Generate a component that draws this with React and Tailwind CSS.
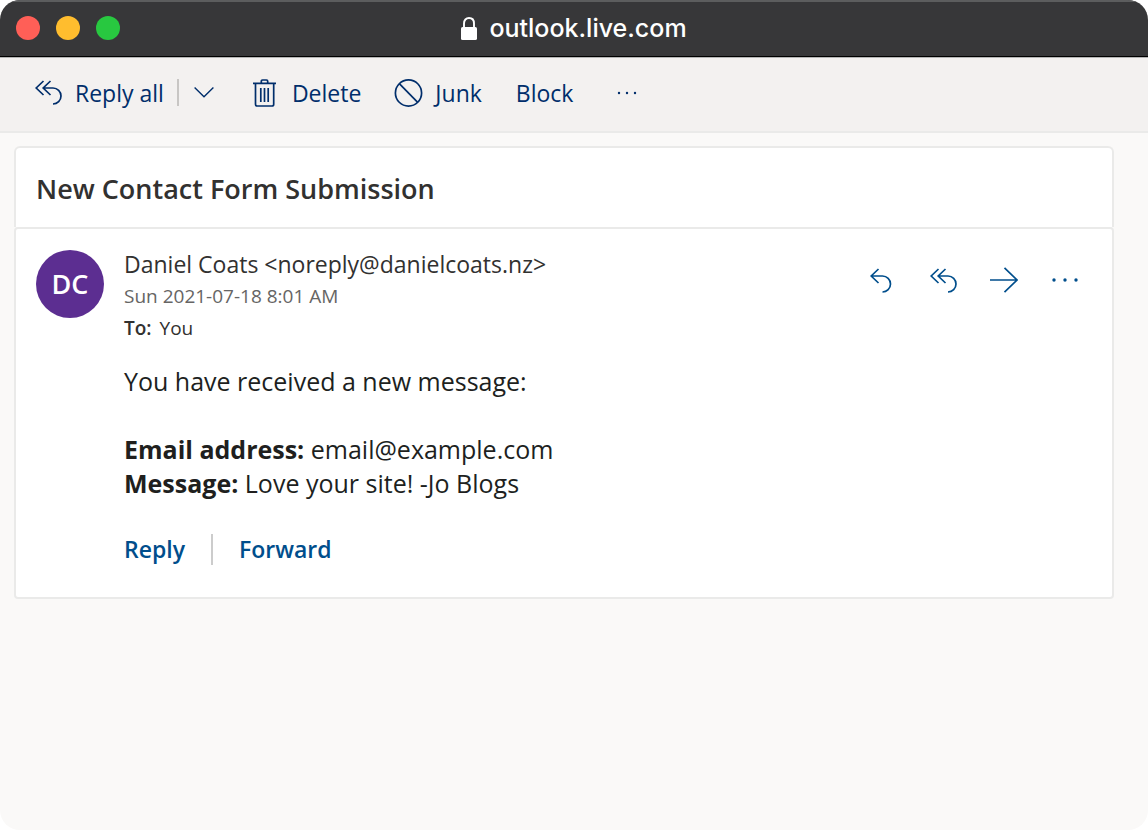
import React from "react";

function ReplyIcon({ className }) {
  return (
    <svg className={className} width="22" height="25" viewBox="0 0 22 25" fill="none" stroke="currentColor" strokeWidth="1.7" aria-hidden="true">
      <path d="M8.5 1 1.2 8l7.3 7M1.2 8h11.3a8 8 0 0 1 0 16" />
    </svg>
  );
}

function ReplyAllIcon({ className }) {
  return (
    <svg className={className} width="27" height="25" viewBox="0 0 27 25" fill="none" stroke="currentColor" strokeWidth="1.7" aria-hidden="true">
      <path d="M8.5 1 1.2 8l7.3 7M15.5 1 8.2 8l7.3 7M8.2 8h9.800a8 8 0 0 1 0 16" />
    </svg>
  );
}

function ChevronIcon() {
  return (
    <svg width="20" height="11" viewBox="0 0 20 11" fill="none" stroke="currentColor" strokeWidth="1.4" aria-hidden="true">
      <path d="m.6.6 9.4 9.2L19.4.6" />
    </svg>
  );
}

function TrashIcon() {
  return (
    <svg width="23" height="28" viewBox="0 0 23 28" fill="none" stroke="currentColor" strokeWidth="1.7" aria-hidden="true">
      <path d="M0 4.3h23M8.3 4V2.200q0-1.200 1.200-1.200h4q1.200 0 1.200 1.200V4M2.500 4.500v20.700q0 1.800 1.800 1.800h14.600q1.800 0 1.800-1.800V4.500M7.800 9v14M11.500 9v14M15.200 9v14" />
    </svg>
  );
}

function BanIcon() {
  return (
    <svg width="29" height="28" viewBox="0 0 29 28" fill="none" stroke="currentColor" strokeWidth="1.7" aria-hidden="true">
      <circle cx="14.5" cy="14" r="13.1" />
      <path d="m5.3 4.7 18.4 18.6" />
    </svg>
  );
}

function ForwardIcon() {
  return (
    <svg width="28" height="26" viewBox="0 0 28 26" fill="none" stroke="currentColor" strokeWidth="1.7" aria-hidden="true">
      <path d="M0 13h27M14.5.8 27 13 14.5 25.2" />
    </svg>
  );
}

function DotsIcon({ width, r }) {
  return (
    <svg width={width} height="4" viewBox={`0 0 ${width} 4`} fill="currentColor" aria-hidden="true">
      <circle cx="2" cy="2" r={r} />
      <circle cx={width / 2} cy="2" r={r} />
      <circle cx={width - 2} cy="2" r={r} />
    </svg>
  );
}

function LockIcon() {
  return (
    <svg width="16" height="23" viewBox="0 0 16 23" fill="none" aria-hidden="true">
      <rect y="10" width="16" height="13" rx="1.6" fill="currentColor" />
      <path d="M3 11V6.5C3 3.2 5 1 8 1s5 2.2 5 5.500V11" stroke="currentColor" strokeWidth="1.9" />
    </svg>
  );
}

function TitleBar() {
  return (
    <header className="grid h-[58px] grid-cols-[1fr_auto_1fr] items-center border-t-2 border-b border-t-[#5c5d5e] border-b-[#b5b5b5] bg-[#373739] px-4 pb-[3px] text-white shadow-[inset_0_-1px_0_#000]">
      <div className="flex gap-4">
        <span className="size-6 rounded-full bg-[#ff5f57]" />
        <span className="size-6 rounded-full bg-[#ffbd2e]" />
        <span className="size-6 rounded-full bg-[#28c840]" />
      </div>
      <div className="flex items-center gap-3">
        <LockIcon />
        <span className="font-['Inter',sans-serif] text-[25px] leading-8 font-medium">outlook.live.com</span>
      </div>
    </header>
  );
}

function Toolbar() {
  return (
    <nav aria-label="Message actions" className="flex h-[75px] items-center border-b-2 border-[#eaeae9] bg-[#f3f1f0] pb-1 pl-[35px] text-[23px] leading-8 text-[#002e6b]">
      <button className="flex items-center gap-[13px]"><ReplyAllIcon />Reply all</button>
      <span className="ml-[13px] h-[27px] w-0.5 bg-[#c8c6c4]" />
      <button aria-label="More reply options" className="ml-[15px]"><ChevronIcon /></button>
      <button className="ml-[39px] flex items-center gap-4"><TrashIcon />Delete</button>
      <button className="ml-[33px] flex items-center gap-3"><BanIcon />Junk</button>
      <button className="ml-[34px]">Block</button>
      <button aria-label="More actions" className="ml-[44px]"><DotsIcon width={20} r={1.2} /></button>
    </nav>
  );
}

function Message() {
  return (
    <section className="flex gap-5 rounded border-2 border-[#eaeae9] bg-white px-5 pt-[19px] pb-8">
      <div className="mt-0.5 flex size-[68px] shrink-0 items-center justify-center rounded-full bg-[#5c2e91] text-[27px] font-semibold text-white">DC</div>
      <div className="min-w-0 flex-1">
        <div className="flex items-start justify-between">
          <div className="text-[19px] leading-8 text-[#323130]">
            <p className="text-[23px]">Daniel Coats &lt;noreply@danielcoats.nz&gt;</p>
            <p className="text-[#666564]">Sun 2021-07-18 8:01 AM</p>
            <p><span className="mr-2 font-semibold">To:</span>You</p>
          </div>
          <div className="mt-4 mr-[14px] flex h-8 items-center text-[#004e8c]">
            <button aria-label="Reply"><ReplyIcon /></button>
            <button aria-label="Reply all" className="ml-[38px]"><ReplyAllIcon /></button>
            <button aria-label="Forward" className="ml-[33px]"><ForwardIcon /></button>
            <button aria-label="More actions" className="ml-[34px]"><DotsIcon width={26} r={1.7} /></button>
          </div>
        </div>
        <div className="mt-5 text-[25px] leading-[34px] text-[#201f1e]">
          <p>You have received a new message:</p>
          <p className="mt-[34px]"><b>Email address:</b> email@example.com</p>
          <p><b>Message:</b> Love your site! -Jo Blogs</p>
        </div>
        <div className="mt-[33px] flex items-center text-[23px] leading-8 font-semibold text-[#004e8c]">
          <button>Reply</button>
          <span className="mx-[26px] h-[31px] w-0.5 bg-[#cccccc]" />
          <button>Forward</button>
        </div>
      </div>
    </section>
  );
}

export default function App() {
  return (
    <div className="min-h-screen overflow-hidden rounded-[20px] bg-[#faf9f8] font-['Open_Sans',sans-serif]">
      <TitleBar />
      <Toolbar />
      <main className="pt-[13px] pr-[34px] pb-8 pl-[14px]">
        <h1 className="rounded-t-md border-2 border-b-0 border-[#eaeae9] bg-white px-5 pt-[21px] pb-[18px] text-[27px] leading-10 font-semibold text-[#323130]">
          New Contact Form Submission
        </h1>
        <Message />
      </main>
    </div>
  );
}
